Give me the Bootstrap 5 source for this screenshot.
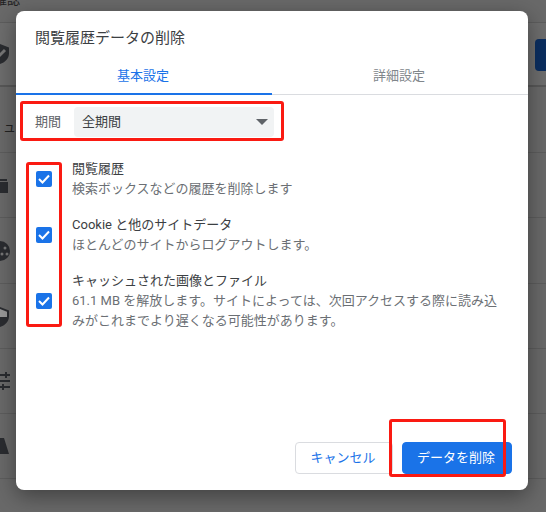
<!DOCTYPE html>
<html lang="ja">
<head>
<meta charset="utf-8">
<title>閲覧履歴データの削除</title>
<link href="https://cdn.jsdelivr.net/npm/bootstrap@5.3.0/dist/css/bootstrap.min.css" rel="stylesheet">
<style>
html,body{height:100%;margin:0;overflow:hidden}
body{background:#696969;font-family:Roboto,"Noto Sans CJK JP",sans-serif;font-size:13px;color:#202124;position:relative;width:546px;height:512px}
.bg-page{height:512px;display:flex;flex-direction:column}
.bg-row{border-bottom:1px solid #5d5d5d;position:relative;flex:none}
.r0{height:23px}.r1{height:64px;background:#6d6d6d;border-bottom:2px solid #585858}.r2{height:66px}.r3{height:65px}.r4{height:66px}.r5{height:65px}.r6{height:65px}.r7{height:65px}.r8{flex:1;border-bottom:0}
.bg-ico{position:absolute;left:-10px;width:20px;height:20px;fill:#2a2c30}
.bg-label{position:absolute;left:-6px;top:-8px;font-size:13px;line-height:16px;color:#222}
.bg-btn{position:absolute;left:535px;top:16px;width:30px;height:32px;background:#0b2e60;border-radius:4px}
.dlg{position:absolute;left:16px;top:11px;width:512px;height:479px;background:#fff;border-radius:8px;box-shadow:0 6px 22px rgba(0,0,0,.4);display:flex;flex-direction:column}
.dlg-title{font-size:15px;line-height:20px;padding:17px 19px 0;color:#3c4043;margin:0;font-weight:400}
.dlg-tabs{display:flex;margin-top:10px;border-bottom:1px solid #dadce0}
.dlg-tab{flex:1;text-align:center;height:36px;line-height:30px;font-size:13px;color:#80868b;background:none;border:0;padding:0 2px 0 0}
.dlg-tab.on{color:#1a73e8;border-bottom:2px solid #1a73e8;margin-bottom:-1px;height:37px}
.period{padding:12px 19px 0;height:42px;box-sizing:content-box;display:flex;align-items:flex-start;gap:13px}
.period-lb{line-height:30px;color:#5f6368}
.period-sel{width:200px;height:30px;background:#f1f3f4;border-radius:4px;line-height:30px;padding:0 6px 0 8px;display:flex;justify-content:space-between;align-items:center;color:#3c4043}
.tri{width:0;height:0;border:6px solid transparent;border-top:6px solid #5f6368;border-bottom:0}
.opts{padding:10px 20px 0}
.opt{display:flex;gap:20px;align-items:center}
.box{width:16px;height:16px;flex:none;background:#1a73e8;border-radius:2px;display:flex;align-items:center;justify-content:center}
.opt-t{line-height:20px;color:#3c4043}
.opt-s{line-height:20px;color:#6b6f74;width:432px}
.opt+.opt{margin-top:16px}
.foot{margin-top:auto;padding:0 16px 16px 0;display:flex;justify-content:flex-end;gap:9px}
.btn-c,.btn-d{height:32px;border-radius:4px;font-size:13px;line-height:30px;padding:0 2px 0 0;border:1px solid #dadce0}
.btn-c{width:98px;background:#fff;color:#1a73e8}
.btn-d{width:110px;background:#1a73e8;color:#fff;border-color:#1a73e8}
.mark-red{position:absolute;border:3px solid #fa1a12;border-radius:3px;pointer-events:none}
.m1{left:20px;top:101px;width:264px;height:40px}
.m2{left:26px;top:162px;width:36px;height:165px}
.m3{left:389px;top:419px;width:117px;height:58px}
</style>
</head>
<body>
<div class="bg-page">
  <div class="bg-row r0"><span class="bg-label">確認</span></div>
  <div class="bg-row r1"><svg class="bg-ico" style="top:21px" viewBox="0 0 20 20"><path d="M10 0l9 3.500v6c0 5-4 9-9 10.500-5-1.500-9-5.500-9-10.500v-6z"/><path d="M7 14l8-8" stroke="#777" stroke-width="3"/></svg><div class="bg-btn"></div></div>
  <div class="bg-row r2"><span class="bg-label" style="left:3px;top:32px">ュ</span></div>
  <div class="bg-row r3"><svg class="bg-ico" style="top:25px" viewBox="0 0 20 20"><path d="M3 1h14v2H3zM4 4h14v11H4z"/></svg></div>
  <div class="bg-row r4"><svg class="bg-ico" style="top:23px" viewBox="0 0 20 20"><circle cx="10" cy="10" r="10"/><circle cx="15" cy="7" r="1.500" fill="#777"/><circle cx="12" cy="13" r="1.500" fill="#777"/><circle cx="17" cy="13" r="1.500" fill="#777"/></svg></div>
  <div class="bg-row r5"><svg class="bg-ico" style="top:23px" viewBox="0 0 20 20"><path d="M10 0l9 3.500v6c0 5-4 9-9 10.500-5-1.500-9-5.500-9-10.500v-6z"/><path d="M10 2l7 2.700V10h-7z" fill="#999"/></svg></div>
  <div class="bg-row r6"><svg class="bg-ico" style="top:22px" viewBox="0 0 20 20"><path d="M10 3h10v2H10zM10 9h10v2H10zM10 15h10v2H10zM15 1h2v6h-2zM12 13h2v6h-2z"/></svg></div>
  <div class="bg-row r7"><svg class="bg-ico" style="top:23px" viewBox="0 0 20 20"><path d="M8 1h6l5 16H8z"/></svg></div>
  <div class="bg-row r8"></div>
</div>
<div class="dlg" role="dialog">
  <h1 class="dlg-title">閲覧履歴データの削除</h1>
  <div class="dlg-tabs">
    <button class="dlg-tab on" type="button">基本設定</button>
    <button class="dlg-tab" type="button">詳細設定</button>
  </div>
  <div class="period">
    <span class="period-lb">期間</span>
    <div class="period-sel"><span>全期間</span><span class="tri"></span></div>
  </div>
  <div class="opts">
    <div class="opt"><span class="box"><svg width="12" height="10" viewBox="0 0 12 10"><path d="M1 5l3.500 3.500L11 1.500" fill="none" stroke="#fff" stroke-width="2"/></svg></span><div><div class="opt-t">閲覧履歴</div><div class="opt-s">検索ボックスなどの履歴を削除します</div></div></div>
    <div class="opt"><span class="box"><svg width="12" height="10" viewBox="0 0 12 10"><path d="M1 5l3.500 3.500L11 1.500" fill="none" stroke="#fff" stroke-width="2"/></svg></span><div><div class="opt-t">Cookie と他のサイトデータ</div><div class="opt-s">ほとんどのサイトからログアウトします。</div></div></div>
    <div class="opt"><span class="box"><svg width="12" height="10" viewBox="0 0 12 10"><path d="M1 5l3.500 3.500L11 1.500" fill="none" stroke="#fff" stroke-width="2"/></svg></span><div><div class="opt-t">キャッシュされた画像とファイル</div><div class="opt-s">61.1 MB を解放します。サイトによっては、次回アクセスする際に読み込みがこれまでより遅くなる可能性があります。</div></div></div>
  </div>
  <div class="foot">
    <button class="btn-c" type="button">キャンセル</button>
    <button class="btn-d" type="button">データを削除</button>
  </div>
</div>
<div class="mark-red m1"></div>
<div class="mark-red m2"></div>
<div class="mark-red m3"></div>
<script src="https://cdn.jsdelivr.net/npm/bootstrap@5.3.0/dist/js/bootstrap.bundle.min.js"></script>
</body>
</html>
